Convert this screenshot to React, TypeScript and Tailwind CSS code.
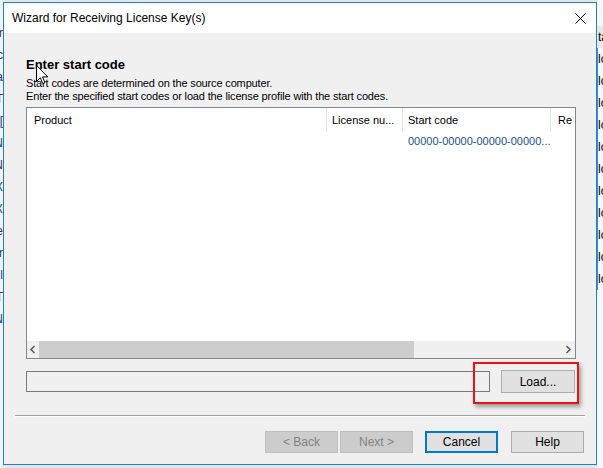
import React from 'react';

const sans = { fontFamily: '"Liberation Sans", Arial, sans-serif' };

const leftBits = ['r', 'c', 'a', 'T', '[', 'N', 'N', 'X', 'X', 'e', 'r', 'l', 'T', 'N'];
const rightRows = Array.from({ length: 11 }, () => 'load');

const Cursor = () => (
  <svg width="13" height="20" viewBox="0 0 13 20" className="absolute left-[32px] top-[62px]">
    <path d="M0.5 0.5 L0.5 16.5 L4.3 12.8 L6.8 18.6 L9 17.6 L6.5 11.9 L11.8 11.9 Z" fill="#fff" stroke="#000" strokeWidth="1" />
  </svg>
);

const Chevron = ({ dir }: { dir: 'left' | 'right' }) => (
  <svg width="8" height="9" viewBox="0 0 8 9">
    <path d={dir === 'left' ? 'M5.5 1 L2 4.5 L5.5 8' : 'M2.5 1 L6 4.5 L2.5 8'} fill="none" stroke="#606060" strokeWidth="1.6" />
  </svg>
);

const WinButton = ({ label, disabled, focused }: { label: string; disabled?: boolean; focused?: boolean }) => (
  <div
    className={`w-[73px] h-[22px] flex items-center justify-center text-[12px] ${
      disabled
        ? 'bg-[#cccccc] border border-[#bfbfbf] text-[#838383]'
        : focused
        ? 'bg-[#e1e1e1] border-2 border-[#0078d7] text-black'
        : 'bg-[#e1e1e1] border border-[#adadad] text-black'
    }`}
  >
    {label}
  </div>
);

const App = () => {
  return (
    <div className="w-[603px] h-[468px] overflow-hidden bg-[#e6e6e6] flex" style={sans}>
      {/* window behind, left edge */}
      <div className="w-[3px] shrink-0 overflow-hidden bg-[#f3f3f3] flex flex-col items-end pt-[22px] text-[12px] leading-[22px]">
        {leftBits.map((c, i) => (
          <span key={i} className={i % 3 === 0 ? 'text-[#6b1f4f]' : 'text-[#1f3f7a]'}>{c}</span>
        ))}
      </div>

      {/* dialog */}
      <div className="relative w-[594px] h-[463px] mt-[2px] shrink-0 border border-[#1883d7] bg-[#f0f0f0] flex flex-col">
        <div className="h-[30px] bg-white flex items-center justify-between pl-[8px] pr-[10px]">
          <span className="text-[12px] text-black">Wizard for Receiving License Key(s)</span>
          <svg width="11" height="11" viewBox="0 0 11 11">
            <path d="M0.5 0.5 L10.5 10.5 M10.5 0.5 L0.5 10.5" stroke="#000" strokeWidth="1" />
          </svg>
        </div>

        <div className="flex flex-col pl-[22px] pr-[20px] pt-[24px]">
          <div className="text-[13px] font-bold leading-[16px] text-black">Enter start code</div>
          <div className="mt-[4px] text-[11px] leading-[13px] text-black tracking-[-0.15px]">
            <div>Start codes are determined on the source computer.</div>
            <div>Enter the specified start codes or load the license profile with the start codes.</div>
          </div>

          {/* list view */}
          <div className="mt-[4px] h-[252px] border border-[#828790] bg-white flex flex-col overflow-hidden">
            <div className="h-[24px] flex text-[11px] text-black shrink-0">
              <div className="w-[300px] pl-[7px] flex items-center border-r border-[#e5e5e5]">Product</div>
              <div className="w-[76px] pl-[5px] flex items-center border-r border-[#e5e5e5]">License nu...</div>
              <div className="w-[148px] pl-[5px] flex items-center border-r border-[#e5e5e5]">Start code</div>
              <div className="flex-1 pl-[7px] flex items-center overflow-hidden">Re</div>
            </div>
            <div className="h-[19px] flex text-[11px] items-center shrink-0">
              <div className="w-[376px]" />
              <div className="w-[148px] pl-[5px] text-[#1b4f93] whitespace-nowrap overflow-hidden">00000-00000-00000-00000...</div>
            </div>
            <div className="flex-1" />
            <div className="h-[17px] bg-[#f0f0f0] flex items-center shrink-0">
              <div className="w-[12px] flex justify-center"><Chevron dir="left" /></div>
              <div className="w-[375px] h-[17px] bg-[#cdcdcd]" />
              <div className="flex-1" />
              <div className="w-[14px] flex justify-center"><Chevron dir="right" /></div>
            </div>
          </div>

          {/* path + load */}
          <div className="mt-[11px] flex items-center">
            <div className="w-[464px] h-[21px] border border-[#7a7a7a] bg-[#f0f0f0]" />
            <div className="ml-[11px] w-[74px] h-[23px] border border-[#adadad] bg-[#e1e1e1] flex items-center justify-center text-[12px] text-black">
              Load...
            </div>
          </div>
        </div>

        <div className="mt-[22px] mx-[11px] h-[2px] border-t border-[#a0a0a0] border-b border-b-white" />

        <div className="mt-[14px] flex justify-end pr-[12px]">
          <WinButton label="< Back" disabled />
          <div className="w-[2px]" />
          <WinButton label="Next >" disabled />
          <div className="w-[12px]" />
          <WinButton label="Cancel" focused />
          <div className="w-[13px]" />
          <WinButton label="Help" />
        </div>

        {/* highlight annotation */}
        <div className="absolute left-[469px] top-[359px] w-[106px] h-[42px] border-2 border-[#ee1111] shadow-[2px_3px_4px_rgba(0,0,0,0.35)]" />

        <Cursor />
      </div>

      {/* window behind, right edge */}
      <div className="flex-1 overflow-hidden bg-[#f7f7f7] flex flex-col text-[12px] text-black">
        <div className="h-[26px]" />
        <div className="h-[22px] bg-[#e8e8e8] leading-[22px] pl-[1px]">ta</div>
        {rightRows.map((r, i) => (
          <div key={i} className="h-[22px] leading-[22px] border-l border-[#3b8bd6] whitespace-nowrap">{r}</div>
        ))}
      </div>
    </div>
  );
};

export default App;
